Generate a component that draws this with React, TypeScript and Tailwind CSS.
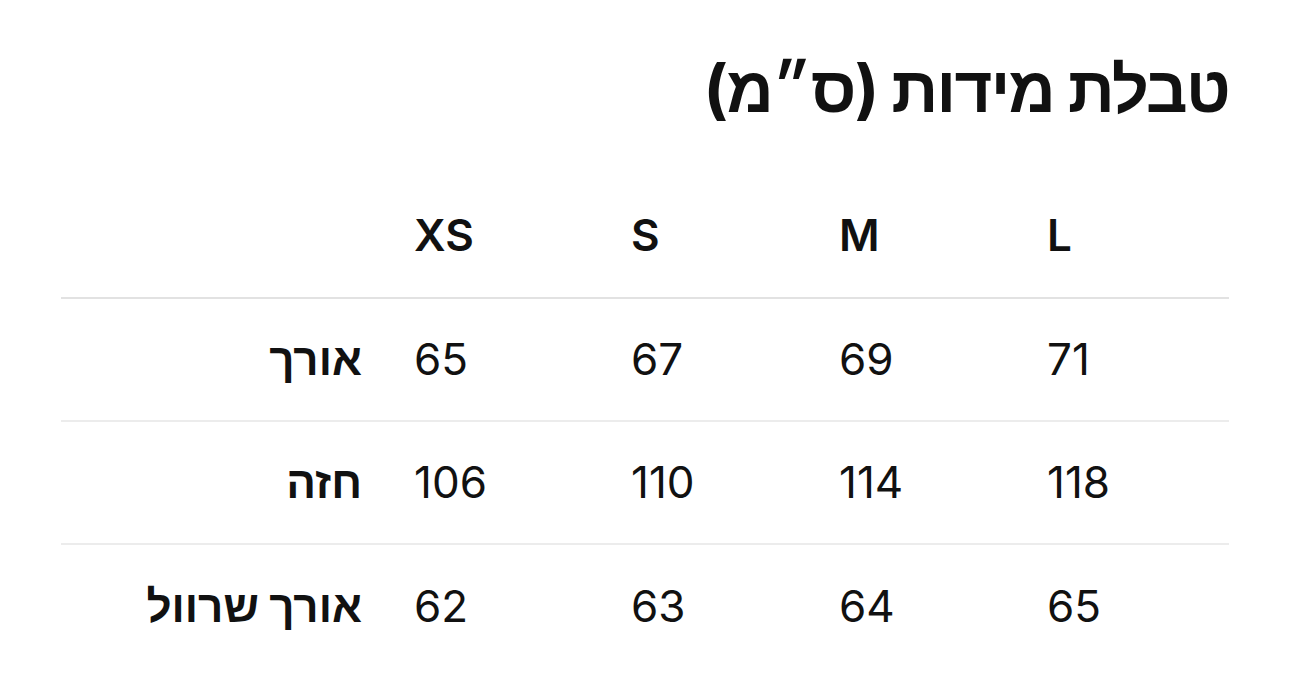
const sizes = ["XS", "S", "M", "L"];

const rows = [
  { label: "אורך", values: ["65", "67", "69", "71"] },
  { label: "חזה", values: ["106", "110", "114", "118"] },
  { label: "אורך שרוול", values: ["62", "63", "64", "65"] },
];

const grid = "grid grid-cols-[327px_217px_208px_208px_1fr] items-center";

const SizeChart = () => {
  return (
    <div className="min-h-[688px] bg-white px-[61px] pt-[50px] font-['Inter','Liberation_Sans',sans-serif] text-[#111]">
      <h1
        dir="rtl"
        className="text-right text-[65px] font-bold leading-[1.2] tracking-tight"
      >
        טבלת מידות (ס״מ)
      </h1>

      <div className="mt-[47px]">
        <div className={`${grid} h-[124px] border-b-2 border-[#e2e2e2] pb-[2px]`}>
          <div />
          {sizes.map((s) => (
            <div key={s} className="pl-[26px] text-[44px] font-semibold">
              {s}
            </div>
          ))}
        </div>

        {rows.map((row, i) => (
          <div
            key={row.label}
            className={`${grid} h-[123px] pb-[2px] ${
              i < rows.length - 1 ? "border-b-2 border-[#ececec]" : ""
            }`}
          >
            <div dir="rtl" className="pr-[26px] text-right text-[44px] font-bold">
              {row.label}
            </div>
            {row.values.map((v) => (
              <div key={v} className="pl-[26px] text-[44px]">
                {v}
              </div>
            ))}
          </div>
        ))}
      </div>
    </div>
  );
};

export default function App() {
  return <SizeChart />;
}
